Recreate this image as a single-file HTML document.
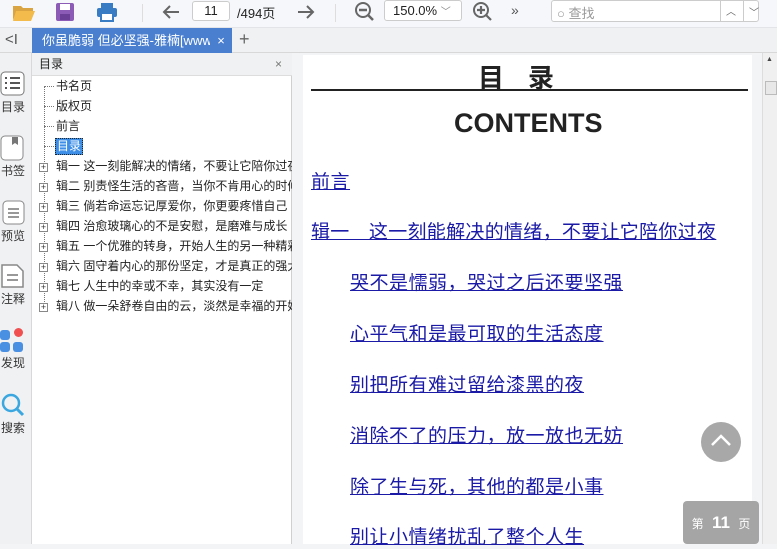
<!DOCTYPE html>
<html><head><meta charset="utf-8"><style>
*{margin:0;padding:0;box-sizing:border-box}
body{width:777px;height:544px;overflow:hidden;position:relative;background:#f3f4f6;font-family:"Liberation Sans","Noto Sans CJK SC",sans-serif;font-size:12px;color:#222}
.abs{position:absolute}
.toolbar{left:0;top:0;width:777px;height:28px;background:#f5f7fa;border-bottom:1px solid #e2e4e8}
.tabbar{left:0;top:28px;width:777px;height:25px;background:#f0f1f3;border-bottom:1px solid #d8d8d8}
.tab{left:32px;top:28px;width:200px;height:25px;background:#4a7fd0;color:#fff;font-size:13px;line-height:25px;padding-left:10px;white-space:nowrap;overflow:hidden}
.side{left:0;top:53px;width:32px;height:491px;background:#f0f1f3;border-right:1px solid #d8d8d8}
.slabel{left:0;width:26px;text-align:center;font-size:12px;color:#333}
.toc{left:32px;top:53px;width:260px;height:491px;background:#fff;border-right:1px solid #d0d0d0}
.tochead{left:32px;top:53px;width:260px;height:23px;background:#f0f1f3;border-bottom:1px solid #ddd;font-size:12px;line-height:23px;padding-left:7px}
.ti{left:56px;font-size:12px;white-space:nowrap;width:236px;overflow:hidden;height:17px;line-height:17px}
.plus{left:39px;width:9px;height:9px;border:1px solid #888;font-size:9px;line-height:7px;text-align:center;color:#333;background:#fff}
.page{left:303px;top:55px;width:449px;height:489px;background:#fff}
.l{position:absolute;font-size:19px;letter-spacing:0.5px;white-space:nowrap;color:#1a1aa6;text-decoration:underline}
.sb{left:762px;top:53px;width:15px;height:491px;background:#f0f0f0;border-left:1px solid #ddd}
</style></head><body>
<div class="abs toolbar"></div>
<svg class="abs" style="left:12px;top:2px" width="24" height="20"><path d="M1 4h8l2 2h10v3H5L1 18z" fill="#d9a441"/><path d="M4 9h19l-4 10H1z" fill="#f2bb4b"/></svg>
<svg class="abs" style="left:55px;top:2px" width="20" height="20"><rect x="1" y="1" width="18" height="18" rx="2" fill="#8c5bb5"/><rect x="5" y="2" width="10" height="6" fill="#fff"/><rect x="5" y="12" width="10" height="6" fill="#6b3f96"/></svg>
<svg class="abs" style="left:96px;top:2px" width="22" height="20"><rect x="5" y="1" width="12" height="5" fill="#3a7cc4"/><rect x="1" y="6" width="20" height="9" rx="2" fill="#3a7cc4"/><rect x="5" y="11" width="12" height="8" fill="#fff" stroke="#3a7cc4" stroke-width="2"/></svg>
<div class="abs" style="left:142px;top:4px;width:1px;height:18px;background:#ddd"></div>
<svg class="abs" style="left:161px;top:3px" width="20" height="18"><path d="M18 9H3M9 3L3 9l6 6" stroke="#666" stroke-width="2" fill="none"/></svg>
<div class="abs" style="left:192px;top:1px;width:38px;height:20px;border:1px solid #ccc;border-radius:3px;background:#fff;text-align:center;line-height:18px;font-size:13px">11</div>
<div class="abs" style="left:237px;top:3px;font-size:13px">/494页</div>
<svg class="abs" style="left:296px;top:3px" width="20" height="18"><path d="M2 9h15M11 3l6 6-6 6" stroke="#666" stroke-width="2" fill="none"/></svg>
<div class="abs" style="left:335px;top:4px;width:1px;height:18px;background:#ddd"></div>
<svg class="abs" style="left:354px;top:1px" width="22" height="22"><circle cx="9" cy="9" r="7" stroke="#666" stroke-width="2" fill="none"/><path d="M5 9h8M14 14l5 5" stroke="#666" stroke-width="2.5"/></svg>
<div class="abs" style="left:384px;top:0;width:78px;height:21px;border:1px solid #ccc;border-radius:3px;background:#fff;font-size:13px;line-height:19px;padding-left:8px">150.0% <span style="color:#888;font-size:10px">﹀</span></div>
<svg class="abs" style="left:472px;top:1px" width="22" height="22"><circle cx="9" cy="9" r="7" stroke="#666" stroke-width="2" fill="none"/><path d="M5 9h8M9 5v8M14 14l5 5" stroke="#666" stroke-width="2.2"/></svg>
<div class="abs" style="left:511px;top:2px;font-size:14px;color:#555">»</div>
<div class="abs" style="left:551px;top:0;width:208px;height:22px;border:1px solid #ccc;border-radius:3px;background:#fff"></div>
<div class="abs" style="left:557px;top:3px;font-size:13px;color:#999">○ 查找</div>
<div class="abs" style="left:720px;top:0;width:1px;height:22px;background:#ccc"></div>
<div class="abs" style="left:743px;top:0;width:1px;height:22px;background:#ccc"></div>
<div class="abs" style="left:726px;top:3px;font-size:10px;color:#666">︿</div>
<div class="abs" style="left:749px;top:4px;font-size:10px;color:#666">﹀</div>

<div class="abs tabbar"></div>
<div class="abs" style="left:5px;top:31px;font-size:15px;color:#555">&lt;I</div>
<div class="abs tab">你虽脆弱 但必坚强-雅楠[www.j9<span class="abs" style="left:178px;top:0;width:22px;background:#4a7fd0;text-align:center">×</span></div>
<div class="abs" style="left:239px;top:29px;font-size:18px;color:#666">+</div>

<div class="abs side"></div>
<svg class="abs" style="left:0;top:71px" width="26" height="26"><rect x="1" y="1" width="23" height="23" rx="4" fill="#fff" stroke="#777"/><path d="M5 7h2M10 7h10M5 12h2M10 12h10M5 17h2M10 17h10" stroke="#555" stroke-width="2"/></svg>
<div class="abs slabel" style="top:98px">目录</div>
<svg class="abs" style="left:0;top:135px" width="26" height="26"><rect x="1" y="1" width="22" height="24" rx="4" fill="#fff" stroke="#888"/><path d="M12 2v8l3-2 3 2V2" fill="#777"/></svg>
<div class="abs slabel" style="top:162px">书签</div>
<svg class="abs" style="left:0;top:198px" width="26" height="28"><rect x="3" y="3" width="21" height="23" rx="4" fill="#fff" stroke="#888"/><path d="M8 11h11M8 15h11M8 19h11" stroke="#777" stroke-width="1.6"/></svg>
<div class="abs slabel" style="top:227px">预览</div>
<svg class="abs" style="left:0;top:262px" width="26" height="28"><path d="M2 3h15l6 6v16H2z" fill="#fff" stroke="#888" stroke-width="1.5"/><path d="M7 13h11M7 18h11" stroke="#777" stroke-width="1.6"/></svg>
<div class="abs slabel" style="top:290px">注释</div>
<div class="abs" style="left:0;top:330px;width:10px;height:10px;border-radius:3px;background:#4a90e2"></div>
<div class="abs" style="left:14px;top:328px;width:9px;height:9px;border-radius:50%;background:#f05050"></div>
<div class="abs" style="left:0;top:342px;width:10px;height:10px;border-radius:3px;background:#4a90e2"></div>
<div class="abs" style="left:13px;top:342px;width:10px;height:10px;border-radius:3px;background:#4a90e2"></div>
<div class="abs slabel" style="top:354px">发现</div>
<svg class="abs" style="left:0;top:392px" width="26" height="26"><circle cx="11" cy="11" r="8" stroke="#3aa7e0" stroke-width="2.5" fill="none"/><path d="M17 17l6 6" stroke="#3aa7e0" stroke-width="3"/></svg>
<div class="abs slabel" style="top:419px">搜索</div>

<div class="abs toc"></div>
<div class="abs tochead">目录<span class="abs" style="left:243px;top:0;color:#777">×</span></div>
<div class="abs" style="left:44px;top:86px;height:222px;border-left:1px dotted #777"></div>
<div class="abs" style="left:44px;top:86px;width:10px;border-top:1px dotted #777"></div>
<div class="abs" style="left:44px;top:106px;width:10px;border-top:1px dotted #777"></div>
<div class="abs" style="left:44px;top:126px;width:10px;border-top:1px dotted #777"></div>
<div class="abs" style="left:44px;top:146px;width:10px;border-top:1px dotted #777"></div>
<div class="abs ti" style="top:78px">书名页</div>
<div class="abs ti" style="top:98px">版权页</div>
<div class="abs ti" style="top:118px">前言</div>
<div class="abs" style="left:55px;top:138px;height:17px;line-height:15px;background:#3c8ee6;color:#fff;border:1px dotted #222;padding:0 1px">目录</div>
<div class="abs plus" style="top:163px">+</div><div class="abs ti" style="top:158px">辑一 这一刻能解决的情绪，不要让它陪你过夜</div>
<div class="abs plus" style="top:183px">+</div><div class="abs ti" style="top:178px">辑二 别责怪生活的吝啬，当你不肯用心的时候</div>
<div class="abs plus" style="top:203px">+</div><div class="abs ti" style="top:198px">辑三 倘若命运忘记厚爱你，你更要疼惜自己</div>
<div class="abs plus" style="top:223px">+</div><div class="abs ti" style="top:218px">辑四 治愈玻璃心的不是安慰，是磨难与成长</div>
<div class="abs plus" style="top:243px">+</div><div class="abs ti" style="top:238px">辑五 一个优雅的转身，开始人生的另一种精彩</div>
<div class="abs plus" style="top:263px">+</div><div class="abs ti" style="top:258px">辑六 固守着内心的那份坚定，才是真正的强大</div>
<div class="abs plus" style="top:283px">+</div><div class="abs ti" style="top:278px">辑七 人生中的幸或不幸，其实没有一定</div>
<div class="abs plus" style="top:303px">+</div><div class="abs ti" style="top:298px">辑八 做一朵舒卷自由的云，淡然是幸福的开始</div>

<div class="abs page"></div>
<div class="abs" style="left:478px;top:58px;font-size:26px;font-weight:bold;letter-spacing:24px;white-space:nowrap">目录</div>
<div class="abs" style="left:311px;top:89px;width:437px;height:2px;background:#222"></div>
<div class="abs" style="left:454px;top:108px;font-size:27px;font-weight:bold">CONTENTS</div>
<div class="l" style="left:311px;top:167px">前言</div>
<div class="l" style="left:311px;top:217px;letter-spacing:0.3px">辑一　这一刻能解决的情绪，不要让它陪你过夜</div>
<div class="l" style="left:350px;top:268px">哭不是懦弱，哭过之后还要坚强</div>
<div class="l" style="left:350px;top:319px">心平气和是最可取的生活态度</div>
<div class="l" style="left:350px;top:370px">别把所有难过留给漆黑的夜</div>
<div class="l" style="left:350px;top:421px">消除不了的压力，放一放也无妨</div>
<div class="l" style="left:350px;top:472px">除了生与死，其他的都是小事</div>
<div class="l" style="left:350px;top:522px">别让小情绪扰乱了整个人生</div>
<div class="abs" style="left:701px;top:422px;width:40px;height:40px;border-radius:50%;background:#a8a8a8"></div>
<svg class="abs" style="left:709px;top:432px" width="24" height="16"><path d="M3 13l9-9 9 9" stroke="#fff" stroke-width="2.5" fill="none"/></svg>
<div class="abs" style="left:683px;top:501px;width:76px;height:43px;border-radius:4px;background:#a5a5a5;color:#fff;font-size:12px;line-height:43px;text-align:center;white-space:nowrap">第 <b style="font-size:17px;margin:0 5px">11</b> 页</div>
<div class="abs sb"></div>
<div class="abs" style="left:766px;top:56px;font-size:7px;color:#444">▲</div>
<div class="abs" style="left:765px;top:81px;width:12px;height:14px;background:#e8e8e8;border:1px solid #bbb"></div>
</body></html>
